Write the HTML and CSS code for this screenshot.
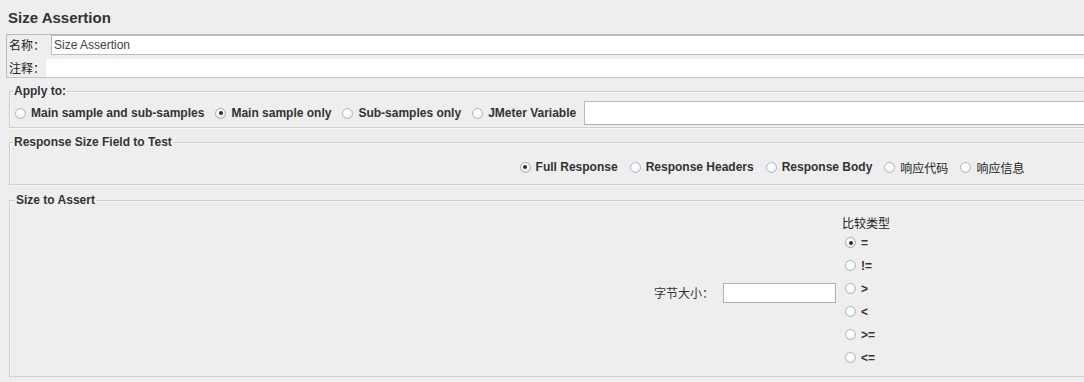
FILE: index.html
```html
<!DOCTYPE html>
<html lang="zh">
  <head>
    <meta charset="UTF-8" />
    <title>Size Assertion</title>
    <link rel="stylesheet" href="styles.css">
  </head>
  <body>
    <div class="page">
      <h1 class="title">Size Assertion</h1>

      <!-- name / comments -->
      <div class="name-panel">
        <div class="name-row">
          <label class="name-label">名称：</label>
          <input class="name-input" type="text" value="Size Assertion" />
        </div>
        <div class="name-row comment-row">
          <label class="name-label">注释：</label>
          <input class="name-input" type="text" />
        </div>
      </div>

      <!-- scope -->
      <fieldset class="group apply-group">
        <legend>Apply to:</legend>
        <div class="radio-row">
          <label class="opt"><span class="radio"></span>Main sample and sub-samples</label>
          <label class="opt"><span class="radio on"></span>Main sample only</label>
          <label class="opt"><span class="radio"></span>Sub-samples only</label>
          <label class="opt"><span class="radio"></span>JMeter Variable</label>
          <input class="var-input" type="text" />
        </div>
      </fieldset>

      <!-- field to test -->
      <fieldset class="group field-group">
        <legend>Response Size Field to Test</legend>
        <div class="radio-row centered">
          <label class="opt"><span class="radio on"></span>Full Response</label>
          <label class="opt"><span class="radio"></span>Response Headers</label>
          <label class="opt"><span class="radio"></span>Response Body</label>
          <label class="opt cjk"><span class="radio"></span>响应代码</label>
          <label class="opt cjk"><span class="radio"></span>响应信息</label>
        </div>
      </fieldset>

      <!-- size -->
      <fieldset class="group size-group">
        <legend>Size to Assert</legend>
        <div class="size-body">
          <div class="size-field">
            <label class="cjk">字节大小：</label>
            <input class="size-input" type="text" />
          </div>
          <div class="op-col">
            <div class="op-title cjk">比较类型</div>
            <label class="op"><span class="radio on"></span>=</label>
            <label class="op"><span class="radio"></span>!=</label>
            <label class="op"><span class="radio"></span>&gt;</label>
            <label class="op"><span class="radio"></span>&lt;</label>
            <label class="op"><span class="radio"></span>&gt;=</label>
            <label class="op"><span class="radio"></span>&lt;=</label>
          </div>
        </div>
      </fieldset>
    </div>
  </body>
</html>
```

FILE: styles.css
```css
:root{--bg:#eeeeee;--text:#333333;--line:#cfcfcf;--field-line:#b7bcc2}
*{box-sizing:border-box;margin:0;padding:0}
html,body{background:var(--bg);overflow:hidden}
body{font-family:"Liberation Sans","Noto Sans CJK SC",sans-serif;font-size:12px;color:var(--text)}
.page{width:1544px}
.cjk{font-family:"Noto Sans CJK SC",sans-serif}

.title{font-size:15px;line-height:18px;font-weight:700;padding:9px 0 0 8px}

/* name + comments */
.name-panel{margin:7px 0 0 6px;border:1px solid #b9b9b9;border-right:0;border-bottom-color:#c2c2c2}
.name-row{display:flex;align-items:center;height:20px}
.name-label{width:44px;padding-left:2px;font-family:"Noto Sans CJK SC",sans-serif;font-size:12px;line-height:18px;color:#222}
.name-input{flex:1;height:20px;border:1px solid #bdbdbd;background:#fff;font:12px "Liberation Sans",sans-serif;color:#444;padding:0 2px;outline:none}
.comment-row{margin-top:4px;height:18px}
.comment-row .name-label{width:39px}
.comment-row .name-input{height:18px;border:0}

/* titled groups */
.group{margin:6px 9px 0;border:1px solid var(--line);box-shadow:inset 1px 1px 0 #f8f8f8,1px 1px 0 #f8f8f8}
.group legend{margin-left:3px;padding:0 1px;font-weight:700;font-size:12px;line-height:14px;color:var(--text)}
.apply-group{padding:3px 0 2px}
.apply-group .radio-row{padding-left:5px}
.field-group{margin-top:7px;padding:10px 0 9px}
.size-group{margin-top:8px;padding:0;height:184px;display:flex}
.size-group legend{margin-left:5px}

.radio-row{display:flex;align-items:center;height:24px}
.radio-row.centered{justify-content:center;height:16px}
.opt{display:flex;align-items:center;gap:5px;margin-right:11px;font-weight:700;white-space:nowrap}
.opt.cjk{font-weight:400;color:#222}
.centered .opt{margin:0 6px 0 6px}

.radio{display:inline-block;width:11px;height:11px;border-radius:50%;border:1px solid #aab6c3;background:radial-gradient(circle at 40% 35%,#ffffff 30%,#e3e8ee 100%);position:relative;flex:none}
.radio.on{border-color:#a9a9a9;background:radial-gradient(circle at 40% 35%,#ffffff 30%,#dcdcdc 100%)}
.radio.on::after{content:"";position:absolute;left:2.5px;top:2.5px;width:4px;height:4px;border-radius:50%;background:#2b2b2b}

.var-input{flex:1;height:24px;margin:0 8px 0 -3px;border:1px solid var(--field-line);border-bottom-color:#9fb0c2;background:#fff;outline:none}

/* size to assert */
.size-body{flex:1;display:flex;justify-content:center;align-items:center;padding:1px 0 0 8px}
.size-field{display:flex;align-items:center;gap:9px;margin-top:1px}
.size-field label{font-size:12px;line-height:16px}
.size-input{width:113px;height:20px;border:1px solid #b0b0b0;background:#fff;outline:none}
.op-col{display:flex;flex-direction:column;margin-left:6px;width:56px}
.op-title{font-size:12px;line-height:16px;color:#222}
.op{display:flex;align-items:center;gap:5px;height:23px;padding-left:3px;font-weight:700}
```
